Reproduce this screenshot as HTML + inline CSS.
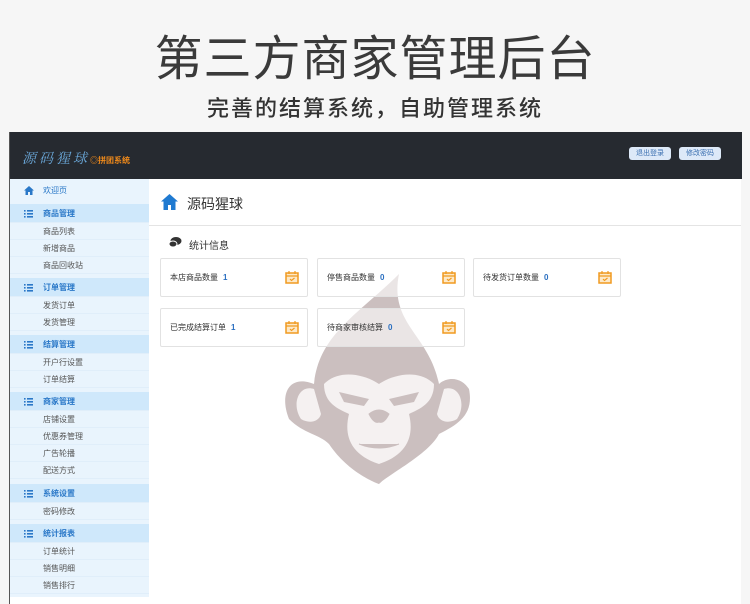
<!DOCTYPE html>
<html><head><meta charset="utf-8"><style>
*{margin:0;padding:0;box-sizing:border-box}
body{width:750px;height:604px;background:#f6f6f6;font-family:"Liberation Sans","Noto Sans CJK SC",sans-serif;position:relative;overflow:hidden}
.t1{position:absolute;top:30px;left:0;width:750px;text-align:center;font-size:48px;color:#3a3a3a;letter-spacing:1px;line-height:60px}
.t2{position:absolute;top:94px;left:0;width:750px;text-align:center;font-size:22px;color:#333;font-weight:500;line-height:30px;letter-spacing:2px}
.frame{position:absolute;left:9px;top:132px;width:732px;height:472px;background:#fff;border-left:1px solid #555}
.top{position:absolute;left:0;top:0;width:732px;height:47px;background:#262a30}
.logo{position:absolute;left:12px;top:16px;color:#6aa7d8;font-size:14px;font-family:"Liberation Serif","Noto Serif CJK SC",serif;letter-spacing:3px;font-style:italic}
.logo b{color:#f08a1a;font-size:8px;font-style:normal;letter-spacing:0;font-family:"Noto Sans CJK SC",sans-serif}
.btn{position:absolute;top:15px;height:13px;background:#dde9f8;border-radius:3px;font-size:7px;color:#3a6fb0;text-align:center;line-height:13px}
.side{position:absolute;left:0;top:47px;width:139px;height:418px;background:#e9f4fd}
.r{position:absolute;left:0;width:139px;font-size:8px;line-height:17px;height:17px;color:#555;padding-left:33px;border-bottom:1px solid #e0eefa}
.h{background:#cfe8fb;color:#2a78c8;font-weight:bold;height:19px;line-height:19px;padding-left:33px}
.ic{position:absolute;left:14px;top:5px;width:10px;height:9px}
.main{position:absolute;left:139px;top:47px;right:0;bottom:0}
.ch{height:47px;border-bottom:1px solid #e4e4e4;position:relative}
.ch span{position:absolute;left:38px;top:15px;font-size:14px;color:#333}
.card{position:absolute;width:148px;height:39px;border:1px solid #e2e2e2;border-radius:2px;background:rgba(255,255,255,.6);font-size:8px;color:#333;line-height:37px;padding-left:9px}
.card i{font-style:normal;color:#2a6fc0;font-weight:bold;margin-left:5px}
.card svg{position:absolute;right:8px;top:12px}
</style></head><body>
<div class="t1">第三方商家管理后台</div>
<div class="t2">完善的结算系统，自助管理系统</div>
<div class="frame">
<div class="top"><div class="logo">源码猩球<b>◎拼团系统</b></div>
<div class="btn" style="left:619px;width:42px">退出登录</div>
<div class="btn" style="left:669px;width:42px">修改密码</div></div>
<div class="side">
<div class="r" style="top:2px;height:19px;line-height:19px;color:#2a78c8;border:0"><svg class="ic" viewBox="0 0 10 9"><path d="M5 0L0 4.5h1.5V9h2.5V6h2v3h2.5V4.5H10z" fill="#2a78c8"/></svg>欢迎页</div>
</div>
<div class="main">
<div class="ch"><svg style="position:absolute;left:12px;top:15px" width="17" height="16" viewBox="0 0 17 16"><path d="M8.5 0L0 7.5h2.5V16h4.5v-5h3v5h4.5V7.5H17z" fill="#1f7ad1"/></svg><span>源码猩球</span></div>
<svg style="position:absolute;left:20px;top:58px" width="13" height="11" viewBox="0 0 13 11"><ellipse cx="7" cy="4" rx="5.5" ry="4" fill="#333"/><ellipse cx="4" cy="7" rx="4" ry="3" fill="#333" stroke="#fff"/></svg>
<div style="position:absolute;left:40px;top:58px;font-size:10px;color:#333">统计信息</div>
<svg style="position:absolute;left:130px;top:95px" width="200" height="210" viewBox="0 0 200 210"><path d="M120 0C80 40 40 60 35 110 10 100 0 120 10 145 25 160 40 160 50 170 70 200 100 210 100 210 110 200 150 180 160 160 180 150 195 140 190 115 180 100 165 105 160 110 150 60 110 50 120 0Z" fill="#cbbfbf"/><path d="M35 115C20 110 12 130 22 145 30 150 40 148 42 140Z M165 115C180 110 188 130 178 145 170 150 160 148 158 140Z" fill="#f5f1f1"/><path d="M45 110C60 95 85 100 100 110 115 100 140 95 155 110 155 130 140 135 130 140 135 160 130 180 100 190 70 180 65 160 70 140 60 135 45 130 45 110Z" fill="#f5f1f1"/><path d="M60 118L90 125 85 132 65 128Z M140 118L110 125 115 132 135 128Z" fill="#cbbfbf"/><path d="M90 140Q100 132 110 140 105 150 100 148 95 150 90 140Z M80 170Q100 178 120 170" fill="#cbbfbf" stroke="#cbbfbf"/></svg>
<div class="card" style="left:11px;top:79px">本店商品数量<i>1</i><svg width="14" height="13" viewBox="0 0 14 13"><rect x="1" y="2" width="12" height="10" fill="#fde9c8" stroke="#f09a20" stroke-width="1.5"/><path d="M1 5h12M4 0v3M10 0v3M5 8l1.5 1.5L9.5 7" stroke="#f09a20" fill="none" stroke-width="1.2"/></svg></div>
<div class="card" style="left:168px;top:79px">停售商品数量<i>0</i><svg width="14" height="13" viewBox="0 0 14 13"><rect x="1" y="2" width="12" height="10" fill="#fde9c8" stroke="#f09a20" stroke-width="1.5"/><path d="M1 5h12M4 0v3M10 0v3M5 8l1.5 1.5L9.5 7" stroke="#f09a20" fill="none" stroke-width="1.2"/></svg></div>
<div class="card" style="left:324px;top:79px">待发货订单数量<i>0</i><svg width="14" height="13" viewBox="0 0 14 13"><rect x="1" y="2" width="12" height="10" fill="#fde9c8" stroke="#f09a20" stroke-width="1.5"/><path d="M1 5h12M4 0v3M10 0v3M5 8l1.5 1.5L9.5 7" stroke="#f09a20" fill="none" stroke-width="1.2"/></svg></div>
<div class="card" style="left:11px;top:129px">已完成结算订单<i>1</i><svg width="14" height="13" viewBox="0 0 14 13"><rect x="1" y="2" width="12" height="10" fill="#fde9c8" stroke="#f09a20" stroke-width="1.5"/><path d="M1 5h12M4 0v3M10 0v3M5 8l1.5 1.5L9.5 7" stroke="#f09a20" fill="none" stroke-width="1.2"/></svg></div>
<div class="card" style="left:168px;top:129px">待商家审核结算<i>0</i><svg width="14" height="13" viewBox="0 0 14 13"><rect x="1" y="2" width="12" height="10" fill="#fde9c8" stroke="#f09a20" stroke-width="1.5"/><path d="M1 5h12M4 0v3M10 0v3M5 8l1.5 1.5L9.5 7" stroke="#f09a20" fill="none" stroke-width="1.2"/></svg></div>
</div>
</div>
<div style="position:absolute;left:10px;top:0">
<div class="r h" style="top:204px">商品管理</div>
<div class="r" style="top:223px">商品列表</div><div class="r" style="top:240px">新增商品</div><div class="r" style="top:257px">商品回收站</div>
<div class="r h" style="top:278px">订单管理</div>
<div class="r" style="top:297px">发货订单</div><div class="r" style="top:314px">发货管理</div>
<div class="r h" style="top:335px">结算管理</div>
<div class="r" style="top:354px">开户行设置</div><div class="r" style="top:371px">订单结算</div>
<div class="r h" style="top:392px">商家管理</div>
<div class="r" style="top:411px">店铺设置</div><div class="r" style="top:428px">优惠券管理</div><div class="r" style="top:445px">广告轮播</div><div class="r" style="top:462px">配送方式</div>
<div class="r h" style="top:484px">系统设置</div>
<div class="r" style="top:503px">密码修改</div>
<div class="r h" style="top:524px">统计报表</div>
<div class="r" style="top:543px">订单统计</div><div class="r" style="top:560px">销售明细</div><div class="r" style="top:577px">销售排行</div>
</div>
<svg width="750" height="604" style="position:absolute;left:0;top:0">
<defs><g id="l" fill="#2a78c8"><rect x="24" y="0" width="1.6" height="1.6"/><rect x="27" y="0" width="6" height="1.6"/><rect x="24" y="3" width="1.6" height="1.6"/><rect x="27" y="3" width="6" height="1.6"/><rect x="24" y="6" width="1.6" height="1.6"/><rect x="27" y="6" width="6" height="1.6"/></g></defs>
<use href="#l" y="210"/><use href="#l" y="284"/><use href="#l" y="341"/><use href="#l" y="398"/><use href="#l" y="490"/><use href="#l" y="530"/>
</svg>
</body></html>
